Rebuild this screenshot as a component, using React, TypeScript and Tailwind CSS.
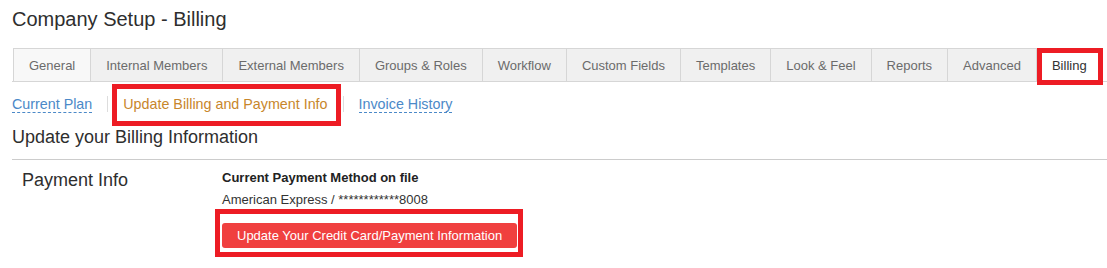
import React from "react";

const tabs = [
  "General",
  "Internal Members",
  "External Members",
  "Groups & Roles",
  "Workflow",
  "Custom Fields",
  "Templates",
  "Look & Feel",
  "Reports",
  "Advanced",
];

function RedBox({ className }: { className: string }) {
  return (
    <span
      className={"pointer-events-none absolute border-[5px] border-[#ed1c24] " + className}
    />
  );
}

export default function App() {
  return (
    <div
      className="w-[1107px] h-[268px] overflow-hidden bg-white pl-[12px] text-[#333]"
      style={{ fontFamily: '"Liberation Sans", Arial, sans-serif' }}
    >
      <h1 className="pt-[7px] text-[20px] leading-[24px] text-[#2e2e2e]">
        Company Setup - Billing
      </h1>

      <div className="mt-[17px] flex border-b border-[#d6d6d6] pl-px">
        {tabs.map((t, i) => (
          <div
            key={t}
            className={
              "flex h-[33px] items-center border-t border-r border-[#d6d6d6] px-[15px] pt-[2px] text-[13px] text-[#6b6b6b] " +
              (i === 0 ? "border-l bg-[#f8f8f8]" : "bg-[#f0f0f0]")
            }
          >
            {t}
          </div>
        ))}
        <div className="relative flex h-[33px] items-center bg-white px-[15px] pt-[2px] text-[13px] text-[#333]">
          Billing
          <RedBox className="left-0 right-[-1px] top-0 bottom-[-4px]" />
        </div>
      </div>

      <div className="mt-[14px] flex h-[16px] items-center text-[14.3px]">
        <span className="border-b border-dashed border-[#4b89c8] leading-[16px] text-[#4b89c8]">
          Current Plan
        </span>
        <span className="mx-[15px] h-[16px] w-px bg-[#dddddd]" />
        <span className="relative leading-[16px] text-[#c8862b]">
          Update Billing and Payment Info
          <RedBox className="left-[-11px] right-[-13px] top-[-12px] bottom-[-14px]" />
        </span>
        <span className="mx-[15px] h-[16px] w-px bg-[#dddddd]" />
        <span className="border-b border-dashed border-[#4b89c8] leading-[16px] text-[#4b89c8]">
          Invoice History
        </span>
      </div>

      <h2 className="mt-[14px] border-b border-[#cccccc] pb-[11px] text-[18px] leading-[22px] text-[#2e2e2e]">
        Update your Billing Information
      </h2>

      <div className="mt-[9px] flex">
        <div className="w-[210px] pl-[10px] text-[18px] leading-[22px] text-[#2e2e2e]">
          Payment Info
        </div>
        <div className="flex flex-col items-start">
          <div className="mt-px text-[13px] font-bold leading-[16px] text-[#222]">
            Current Payment Method on file
          </div>
          <div className="mt-[6px] text-[13px] leading-[16px] text-[#333]">
            American Express / ************8008
          </div>
          <div className="relative mt-[15px]">
            <button className="flex h-[25px] items-center rounded-[3px] bg-[#f0403f] px-[15px] text-[13px] text-white">
              Update Your Credit Card/Payment Information
            </button>
            <RedBox className="left-[-7px] right-[-6px] top-[-14px] bottom-[-9px]" />
          </div>
        </div>
      </div>
    </div>
  );
}
